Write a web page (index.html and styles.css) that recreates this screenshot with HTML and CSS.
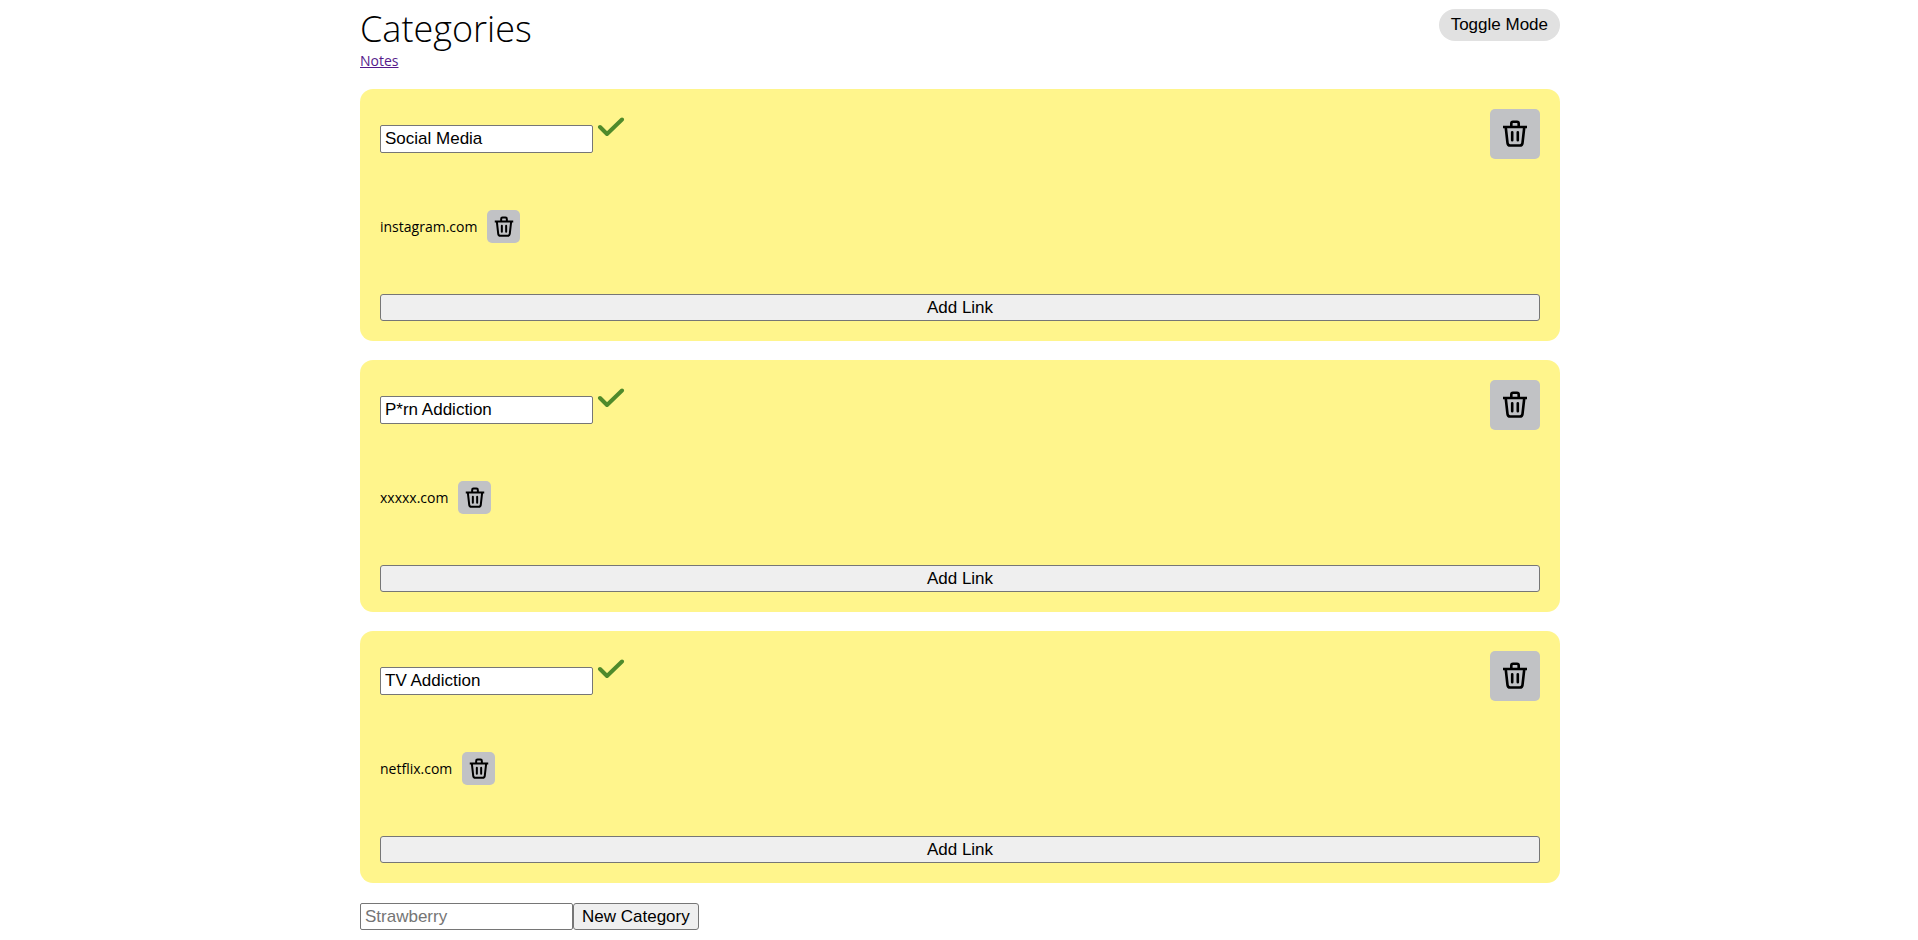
FILE: index.html
```html
<!DOCTYPE html>
<html lang="en">
<head>
<meta charset="utf-8">
<title>Categories</title>
<link rel="stylesheet" href="styles.css">
</head>
<body>
<svg class="sprite" aria-hidden="true">
  <symbol id="trash" viewBox="0 0 26 28">
    <path d="M1 7H25M9.300 7V3.500Q9.300 1.700 11 1.700H15Q16.700 1.700 16.700 3.500V7M3.700 7L5.500 23Q5.800 25.500 8.200 25.500H17.800Q20.200 25.500 20.500 23L22.300 7"/>
    <path d="M10.200 12.300V20.300M15.800 12.300V20.300" stroke-linecap="round"/>
  </symbol>
  <symbol id="check" viewBox="0 0 28 20">
    <path d="M3 10L10 17L25 2.500"/>
  </symbol>
</svg>
<div class="page">
  <header class="header">
    <div>
      <h1 class="title">Categories</h1>
      <a class="nav-link" href="#notes">Notes</a>
    </div>
    <button class="toggle" type="button">Toggle Mode</button>
  </header>
  <main class="categories">
    <section class="card">
      <div class="card-head">
        <input class="field" type="text" aria-label="Category name" value="Social Media">
        <button class="confirm" type="button" aria-label="Save name"><svg><use href="#check"/></svg></button>
        <button class="delete" type="button" aria-label="Delete category"><svg><use href="#trash"/></svg></button>
      </div>
      <div class="link-row">
        <span>instagram.com</span>
        <button class="delete delete-small" type="button" aria-label="Delete link"><svg><use href="#trash"/></svg></button>
      </div>
      <button class="button" type="button">Add Link</button>
    </section>
    <section class="card">
      <div class="card-head">
        <input class="field" type="text" aria-label="Category name" value="P*rn Addiction">
        <button class="confirm" type="button" aria-label="Save name"><svg><use href="#check"/></svg></button>
        <button class="delete" type="button" aria-label="Delete category"><svg><use href="#trash"/></svg></button>
      </div>
      <div class="link-row">
        <span>xxxxx.com</span>
        <button class="delete delete-small" type="button" aria-label="Delete link"><svg><use href="#trash"/></svg></button>
      </div>
      <button class="button" type="button">Add Link</button>
    </section>
    <section class="card">
      <div class="card-head">
        <input class="field" type="text" aria-label="Category name" value="TV Addiction">
        <button class="confirm" type="button" aria-label="Save name"><svg><use href="#check"/></svg></button>
        <button class="delete" type="button" aria-label="Delete category"><svg><use href="#trash"/></svg></button>
      </div>
      <div class="link-row">
        <span>netflix.com</span>
        <button class="delete delete-small" type="button" aria-label="Delete link"><svg><use href="#trash"/></svg></button>
      </div>
      <button class="button" type="button">Add Link</button>
    </section>
  </main>
  <form class="new-category">
    <input class="field" type="text" aria-label="New category name" placeholder="Strawberry">
    <button class="button" type="button">New Category</button>
  </form>
</div>
</body>
</html>
```
FILE: styles.css
```css
* {
  box-sizing: border-box;
}

body {
  margin: 0;
  padding-left: 2px;
  background: #fff;
  color: #000;
  font-family: "Segoe UI", "Open Sans", sans-serif;
  font-size: 14px;
  line-height: 20px;
}

button,
input {
  font-family: "Liberation Sans", Arial, sans-serif;
  font-size: 17px;
  line-height: 20px;
  color: #000;
}

.sprite {
  display: none;
}

.page {
  max-width: 1200px;
  margin: 0 auto;
  padding: 8px 0;
}

.header {
  display: flex;
  justify-content: space-between;
  align-items: flex-start;
  margin-bottom: 18px;
}

.title {
  margin: 0;
  font-size: 36px;
  font-weight: 300;
  line-height: 42px;
}

.nav-link {
  display: block;
  width: fit-content;
  line-height: 21px;
  color: #551a8b;
}

.toggle {
  height: 32px;
  margin-top: 1px;
  padding: 0 12px;
  border: 0;
  border-radius: 16px;
  background: #e1e1e1;
}

.categories {
  display: flex;
  flex-direction: column;
  gap: 19px;
}

.card {
  display: flex;
  flex-direction: column;
  padding: 20px;
  border-radius: 13px;
  background: #fff58c;
}

.card-head {
  display: flex;
  align-items: flex-start;
  height: 50px;
}

.field {
  width: 213px;
  height: 28px;
  padding: 0 4px;
  border: 1px solid #767676;
  border-radius: 2px;
  background: #fff;
}

.field::placeholder {
  color: #757575;
}

.card-head .field {
  margin-top: 16px;
}

.confirm {
  padding: 0;
  margin: 8px 0 0 4px;
  border: 0;
  background: none;
}

.confirm svg {
  display: block;
  width: 28px;
  height: 20px;
  fill: none;
  stroke: #4f8a2b;
  stroke-width: 4;
  stroke-linecap: round;
  stroke-linejoin: round;
}

.delete {
  display: grid;
  place-items: center;
  width: 50px;
  height: 50px;
  margin-left: auto;
  padding: 0;
  border: 0;
  border-radius: 5px;
  background: #c1c2c5;
}

.delete svg {
  width: 26px;
  height: 28px;
  fill: none;
  stroke: #000;
  stroke-width: 2.6;
  stroke-linejoin: round;
}

.link-row {
  display: flex;
  align-items: center;
  gap: 10px;
  margin: 51px 0;
}

.delete-small {
  width: 33px;
  height: 33px;
  margin-left: 0;
}

.delete-small svg {
  width: 20px;
  height: 22px;
}

.button {
  height: 27px;
  padding: 0 8px;
  border: 1px solid #767676;
  border-radius: 3px;
  background: #efefef;
}

.new-category {
  display: flex;
  margin-top: 20px;
}

.new-category .field {
  height: 27px;
}
```
